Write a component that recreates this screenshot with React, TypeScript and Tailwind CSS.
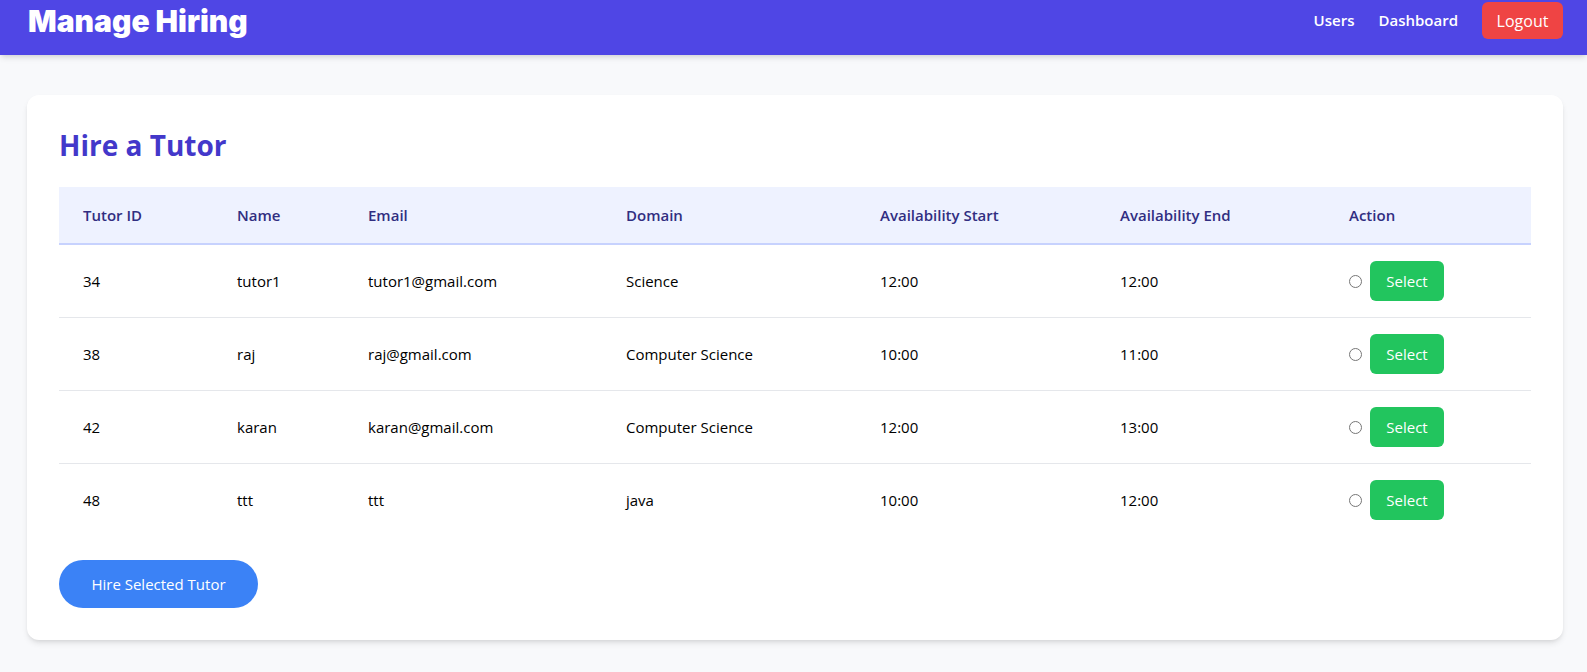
const tutors = [
  { id: 34, name: "tutor1", email: "tutor1@gmail.com", domain: "Science", start: "12:00", end: "12:00" },
  { id: 38, name: "raj", email: "raj@gmail.com", domain: "Computer Science", start: "10:00", end: "11:00" },
  { id: 42, name: "karan", email: "karan@gmail.com", domain: "Computer Science", start: "12:00", end: "13:00" },
  { id: 48, name: "ttt", email: "ttt", domain: "java", start: "10:00", end: "12:00" },
];

const App = () => {
  return (
    <div className="min-h-screen bg-[#f8f9fb] font-['Open_Sans',sans-serif]">
      <nav className="h-[55px] bg-[#4f46e5] shadow-md flex items-start justify-between pl-7 pr-6 pt-[2px]">
        <h1 className="h-[39px] flex items-center text-[30px] font-black text-white font-['Inter',sans-serif]">
          Manage Hiring
        </h1>
        <div className="flex items-center h-[37px] text-white text-[15px] font-semibold">
          <a href="#" className="mr-6">Users</a>
          <a href="#" className="mr-6">Dashboard</a>
          <button className="bg-[#ef4444] rounded-md h-[37px] w-[81px] font-normal text-base">Logout</button>
        </div>
      </nav>

      <div className="pl-[27px] pr-6 pt-10 pb-8">
        <div className="bg-white rounded-xl shadow-md p-8">
          <h2 className="text-[28px] leading-9 font-bold text-[#4338ca] mb-6">Hire a Tutor</h2>
          <table className="w-full table-fixed text-left">
            <colgroup>
              <col className="w-[154px]" />
              <col className="w-[131px]" />
              <col className="w-[258px]" />
              <col className="w-[254px]" />
              <col className="w-[240px]" />
              <col className="w-[229px]" />
              <col />
            </colgroup>
            <thead>
              <tr className="bg-[#eef2ff] border-b-2 border-[#c7d2fe] text-[#312e81] font-semibold text-[15px]">
                <th className="px-6 py-4 leading-6 font-semibold">Tutor ID</th>
                <th className="px-6 py-4 leading-6 font-semibold">Name</th>
                <th className="px-6 py-4 leading-6 font-semibold">Email</th>
                <th className="px-6 py-4 leading-6 font-semibold">Domain</th>
                <th className="px-6 py-4 leading-6 font-semibold">Availability Start</th>
                <th className="px-6 py-4 leading-6 font-semibold">Availability End</th>
                <th className="px-6 py-4 leading-6 font-semibold">Action</th>
              </tr>
            </thead>
            <tbody className="text-[15px] text-black">
              {tutors.map((t, i) => (
                <tr key={t.id} className={i < tutors.length - 1 ? "border-b border-gray-200" : ""}>
                  <td className="px-6 py-4">{t.id}</td>
                  <td className="px-6 py-4">{t.name}</td>
                  <td className="px-6 py-4">{t.email}</td>
                  <td className="px-6 py-4">{t.domain}</td>
                  <td className="px-6 py-4">{t.start}</td>
                  <td className="px-6 py-4">{t.end}</td>
                  <td className="px-6 py-4">
                    <div className="flex items-center gap-2">
                      <input type="radio" name="tutor" className="w-[13px] h-[13px]" />
                      <button className="bg-[#22c55e] text-white rounded-md w-[74px] h-10">Select</button>
                    </div>
                  </td>
                </tr>
              ))}
            </tbody>
          </table>
          <button className="mt-6 bg-[#3b82f6] text-white rounded-full w-[199px] h-12 text-[15px]">
            Hire Selected Tutor
          </button>
        </div>
      </div>
    </div>
  );
};

export default App;
